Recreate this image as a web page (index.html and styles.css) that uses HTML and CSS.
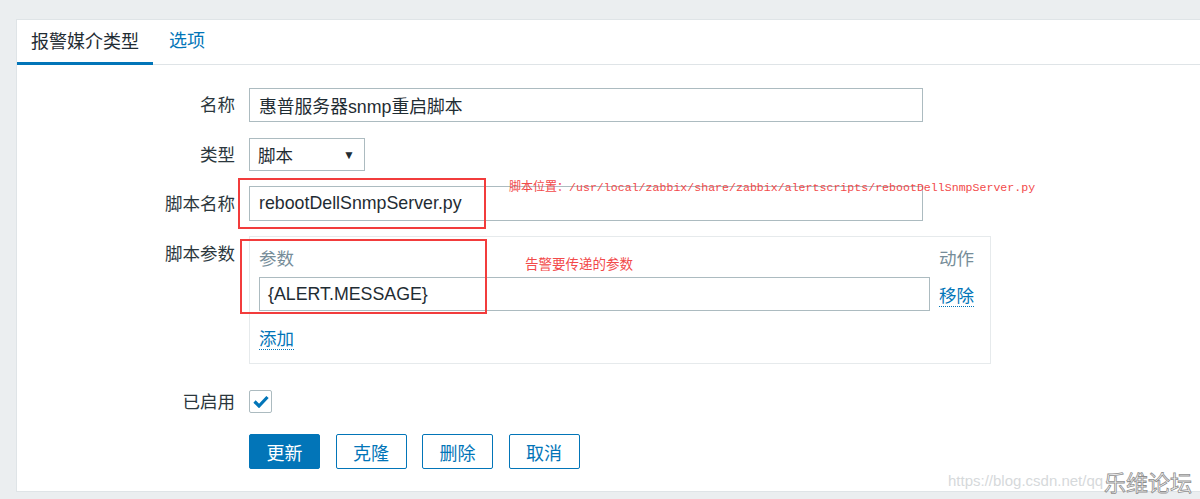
FILE: index.html
```html
<!DOCTYPE html>
<html lang="zh">
<head>
<meta charset="utf-8">
<title>报警媒介类型</title>
<link rel="stylesheet" href="styles.css">
</head>
<body>
<div class="panel">
  <div class="tabs">
    <div class="tab active">报警媒介类型</div>
    <div class="tab link">选项</div>
  </div>
  <div class="form">
    <div class="row row-name">
      <label class="lbl">名称</label>
      <div class="field"><div class="input wide">惠普服务器snmp重启脚本</div></div>
    </div>
    <div class="row row-type">
      <label class="lbl">类型</label>
      <div class="field"><div class="select"><span>脚本</span><span class="arrow">▼</span></div></div>
    </div>
    <div class="row row-script">
      <label class="lbl">脚本名称</label>
      <div class="field"><div class="input wide tall">rebootDellSnmpServer.py</div></div>
    </div>
    <div class="row row-params">
      <label class="lbl lbl-top">脚本参数</label>
      <div class="field">
        <div class="params">
          <div class="p-head">
            <span class="p-col">参数</span>
            <span class="p-act">动作</span>
          </div>
          <div class="p-line">
            <div class="input p-input">{ALERT.MESSAGE}</div>
            <span class="p-act"><a class="dotted">移除</a></span>
          </div>
          <div class="p-add"><a class="dotted">添加</a></div>
        </div>
      </div>
    </div>
    <div class="row row-enabled">
      <label class="lbl">已启用</label>
      <div class="field">
        <div class="checkbox">
          <svg width="16" height="13" viewBox="0 0 16 13"><polyline points="1.5,6.5 6,11 14.5,2" fill="none" stroke="#0275b8" stroke-width="3.2"/></svg>
        </div>
      </div>
    </div>
    <div class="row row-buttons">
      <span></span>
      <div class="field buttons">
        <button class="btn primary">更新</button>
        <button class="btn">克隆</button>
        <button class="btn">删除</button>
        <button class="btn">取消</button>
      </div>
    </div>
  </div>
</div>

<div class="note-box box1"></div>
<div class="note-box box2"></div>
<div class="note note1">脚本位置：<span class="mono">/usr/local/zabbix/share/zabbix/alertscripts/rebootDellSnmpServer.py</span></div>
<div class="note note2">告警要传递的参数</div>

<div class="wm-url">https://blog.csdn.net/qq</div>
<div class="wm-logo">乐维论坛</div>
</body>
</html>
```
FILE: styles.css
```css
* { box-sizing: border-box; }
html, body { margin: 0; padding: 0; }
body {
  position: relative;
  width: 1200px;
  height: 499px;
  overflow: hidden;
  background: #ebeef0;
  font-family: "Liberation Sans", "Noto Sans CJK SC", sans-serif;
  color: #1f2c33;
  font-size: 17px;
}
.panel {
  margin: 19px 0 0 16px;
  height: 473px;
  background: #fff;
  border-top: 1px solid #dfe4e7;
  border-left: 1px solid #dfe4e7;
  border-bottom: 1px solid #dfe4e7;
}
.tabs {
  display: flex;
  height: 45px;
  border-bottom: 1px solid #dfe4e7;
}
.tab {
  padding: 0 14px 2px;
  display: flex;
  align-items: center;
  font-size: 18px;
  line-height: 1;
  white-space: nowrap;
}
.tab.active {
  box-shadow: inset 0 -3px 0 #0275b8;
  margin-bottom: -1px;
  color: #1f2c33;
}
.tab.link { color: #0275b8; padding-left: 16px; }

.form { padding-top: 23px; }
.row {
  display: grid;
  grid-template-columns: 218px 1fr;
  column-gap: 14px;
  align-items: center;
}
.lbl {
  text-align: right;
  font-size: 17.5px;
  line-height: 20px;
  color: #2b373d;
}
.lbl-top { align-self: start; padding-top: 8px; }
.row-type { margin-top: 16px; }
.row-script { margin-top: 15px; }
.row-params { margin-top: 15px; }
.row-enabled { margin-top: 26px; }
.row-buttons { margin-top: 21px; }

.input {
  height: 34px;
  border: 1px solid #acbbc0;
  padding: 0 9px;
  display: flex;
  align-items: center;
  font-size: 17.8px;
  background: #fff;
  white-space: nowrap;
}
.wide { width: 674px; }
.tall { height: 35px; }
.select {
  width: 116px;
  height: 33px;
  border: 1px solid #acbbc0;
  display: flex;
  align-items: center;
  justify-content: space-between;
  padding: 0 9px 0 8px;
  font-size: 17.5px;
}
.arrow { font-size: 12px; color: #1f2c33; }

.params {
  width: 742px;
  height: 128px;
  border: 1px solid #e6eaec;
  padding: 8px 14px 0 9px;
  font-size: 17.5px;
}
.p-head, .p-line {
  display: flex;
  align-items: center;
}
.p-head { height: 24px; color: #768d99; }
.p-col { width: 681px; }
.p-act { width: 37px; white-space: nowrap; }
.p-line { margin-top: 8px; }
.p-input { width: 672px; margin-right: 9px; padding-left: 8px; }
.p-add { margin-top: 16px; line-height: 24px; }
a.dotted {
  color: #0275b8;
  text-decoration: none;
  border-bottom: 1px dotted #0275b8;
}

.checkbox {
  width: 23px;
  height: 23px;
  border: 1px solid #acbbc0;
  border-radius: 2px;
  display: flex;
  align-items: center;
  justify-content: center;
}

.buttons { display: flex; gap: 15.5px; }
.btn {
  width: 71px;
  height: 35px;
  border: 1px solid #0275b8;
  border-radius: 2px;
  background: #fff;
  color: #0275b8;
  font-family: inherit;
  font-size: 18px;
  padding: 0;
}
.btn.primary { background: #0275b8; color: #fff; }

.note-box {
  position: absolute;
  border: 2px solid #f23c3c;
}
.box1 { left: 238px; top: 178px; width: 248px; height: 51px; }
.box2 { left: 240px; top: 239px; width: 247px; height: 75px; }
.note {
  position: absolute;
  color: #f24a4a;
  font-family: "Noto Sans CJK SC", sans-serif;
  white-space: nowrap;
}
.note1 { left: 509px; top: 178px; font-size: 12px; line-height: 16px; }
.note1 .mono { font-family: "Liberation Mono", monospace; font-size: 11.6px; }
.note2 { left: 525px; top: 254px; font-size: 13.5px; line-height: 18px; }

.wm-url {
  position: absolute;
  left: 948px;
  top: 472px;
  font-size: 15px;
  line-height: 18px;
  color: #d6d9db;
  white-space: nowrap;
}
.wm-logo {
  position: absolute;
  left: 1104px;
  top: 467px;
  font-size: 22px;
  line-height: 28px;
  font-family: "Noto Sans CJK SC", sans-serif;
  color: #fff;
  -webkit-text-stroke: 0.8px #8f8f8f;
  white-space: nowrap;
}
```
